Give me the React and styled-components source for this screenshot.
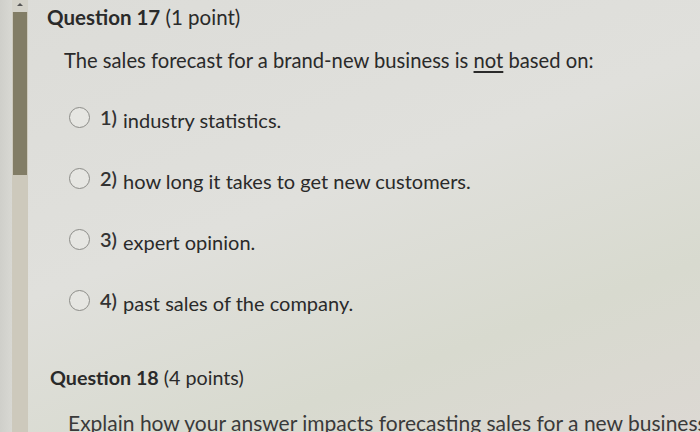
import React from "react"
import styled, { createGlobalStyle } from "styled-components"

const GlobalStyle = createGlobalStyle`
  html, body {
    margin: 0;
    padding: 0;
    background: #dcdcd7;
  }
  * {
    box-sizing: border-box;
  }
`

const options = [
  { num: "1)", text: "industry statistics." },
  { num: "2)", text: "how long it takes to get new customers." },
  { num: "3)", text: "expert opinion." },
  { num: "4)", text: "past sales of the company." },
]

export default function App() {
  return (
    <>
      <GlobalStyle />
      <Page>
        <Scrollbar>
          <Edge />
          <Track>
            <Arrow />
            <Thumb />
          </Track>
        </Scrollbar>
        <Content>
          <QuestionTitle>
            <strong>Question 17</strong> (1 point)
          </QuestionTitle>
          <Prompt>
            The sales forecast for a brand-new business is <u>not</u> based on:
          </Prompt>
          <OptionList>
            {options.map(o => (
              <Option key={o.num}>
                <Radio />
                <Num>{o.num}</Num>
                <OptionText>{o.text}</OptionText>
              </Option>
            ))}
          </OptionList>
          <NextTitle>
            <strong>Question 18</strong> (4 points)
          </NextTitle>
          <NextPrompt>
            Explain how your answer impacts forecasting sales for a new business
          </NextPrompt>
        </Content>
      </Page>
    </>
  )
}

const Page = styled.div`
  display: flex;
  width: 700px;
  height: 432px;
  overflow: hidden;
  background: linear-gradient(160deg, #dcdcd8 0%, #e0e0dc 45%, #d8dacf 75%, #dcd8d3 100%);
  font-family: Lato, "Open Sans", sans-serif;
  color: #2a2a2a;
`
const Scrollbar = styled.div`
  display: flex;
  flex-shrink: 0;
  width: 28px;
  height: 100%;
`
const Edge = styled.div`
  width: 12px;
  background: linear-gradient(90deg, #cfcfca, #d8d8d3);
`
const Track = styled.div`
  display: flex;
  flex-direction: column;
  width: 16px;
  background: #cdc9bc;
`
const Arrow = styled.div`
  height: 12px;
  background: #d4d2c9;
  display: flex;
  justify-content: center;
  align-items: center;
  &::after {
    content: "";
    border-left: 3px solid transparent;
    border-right: 3px solid transparent;
    border-bottom: 3px solid #555;
    margin-bottom: 3px;
  }
`
const Thumb = styled.div`
  height: 163px;
  margin: 0 1px;
  background: #827d66;
`
const Content = styled.div`
  flex: 1;
  padding: 4px 0 0 19px;
`
const QuestionTitle = styled.div`
  font-size: 20.5px;
  line-height: 26px;
  strong {
    font-weight: 700;
  }
`
const Prompt = styled.div`
  margin: 17px 0 0 17px;
  font-size: 20.2px;
  line-height: 26px;
  u {
    text-underline-offset: 3px;
  }
`
const OptionList = styled.div`
  display: flex;
  flex-direction: column;
  gap: 31px;
  margin: 32px 0 0 22px;
`
const Option = styled.div`
  display: flex;
  align-items: center;
  height: 30px;
  font-size: 20px;
`
const Radio = styled.span`
  width: 21px;
  height: 21px;
  border-radius: 50%;
  border: 1.5px solid #8c8c88;
  background: #e6e6e2;
  margin-top: -5px;
  flex-shrink: 0;
`
const Num = styled.span`
  margin: -6px 0 0 10px;
  font-weight: 600;
  color: #333;
`
const OptionText = styled.span`
  margin-left: 6px;
`
const NextTitle = styled(QuestionTitle)`
  margin: 47px 0 0 3px;
  font-size: 19.7px;
`
const NextPrompt = styled.div`
  margin: 19px 0 0 21px;
  font-size: 21px;
  line-height: 26px;
  white-space: nowrap;
  color: #3a3a3a;
`
